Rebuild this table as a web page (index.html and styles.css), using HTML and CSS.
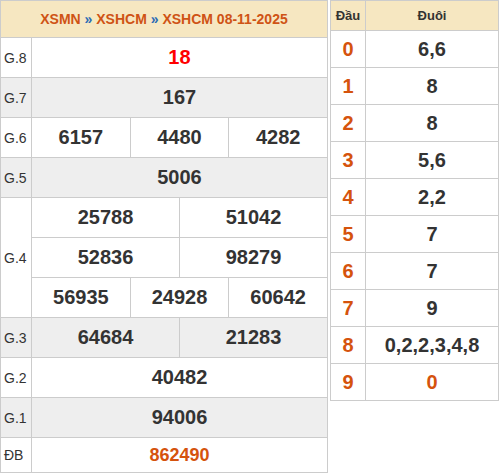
FILE: index.html
```html
<!DOCTYPE html>
<html lang="vi">
<head>
<meta charset="utf-8">
<title>XSHCM 08-11-2025</title>
<link rel="stylesheet" href="styles.css">
</head>
<body>
<div class="wrap">
  <div class="kq">
    <div class="head"><span>XSMN <span class="sep">»</span> XSHCM <span class="sep">»</span> XSHCM 08-11-2025</span></div>

    <div class="lbl">G.8</div>
    <div class="num c6 red">18</div>

    <div class="lbl gray">G.7</div>
    <div class="num c6 gray">167</div>

    <div class="lbl">G.6</div>
    <div class="num c2">6157</div>
    <div class="num c2">4480</div>
    <div class="num c2">4282</div>

    <div class="lbl gray">G.5</div>
    <div class="num c6 gray">5006</div>

    <div class="lbl r3">G.4</div>
    <div class="num c3">25788</div>
    <div class="num c3">51042</div>
    <div class="num c3">52836</div>
    <div class="num c3">98279</div>
    <div class="num c2">56935</div>
    <div class="num c2">24928</div>
    <div class="num c2">60642</div>

    <div class="lbl gray">G.3</div>
    <div class="num c3 gray">64684</div>
    <div class="num c3 gray">21283</div>

    <div class="lbl">G.2</div>
    <div class="num c6">40482</div>

    <div class="lbl gray">G.1</div>
    <div class="num c6 gray">94006</div>

    <div class="lbl">ĐB</div>
    <div class="num c6 db">862490</div>
  </div>

  <div class="lt">
    <div class="th">Đầu</div>
    <div class="th">Đuôi</div>

    <div class="dau">0</div><div class="duoi">6,6</div>
    <div class="dau">1</div><div class="duoi">8</div>
    <div class="dau">2</div><div class="duoi">8</div>
    <div class="dau">3</div><div class="duoi">5,6</div>
    <div class="dau">4</div><div class="duoi">2,2</div>
    <div class="dau">5</div><div class="duoi">7</div>
    <div class="dau">6</div><div class="duoi">7</div>
    <div class="dau">7</div><div class="duoi">9</div>
    <div class="dau">8</div><div class="duoi">0,2,2,3,4,8</div>
    <div class="dau">9</div><div class="duoi orange">0</div>
  </div>
</div>
</body>
</html>
```

FILE: styles.css
```css
* { box-sizing: border-box; }

html, body {
  margin: 0;
  padding: 0;
  background: #fff;
  font-family: "Liberation Sans", Arial, sans-serif;
  color: #333;
}

.wrap {
  display: flex;
  align-items: flex-start;
  gap: 2px;
}

.kq {
  width: 328px;
  display: grid;
  grid-template-columns: 31px repeat(6, 1fr);
  grid-template-rows: 37px repeat(10, 40px) 35px;
  border-left: 1px solid #ccc;
  border-top: 1px solid #ccc;
}

.kq > div {
  border-right: 1px solid #ccc;
  border-bottom: 1px solid #ccc;
  display: flex;
  align-items: center;
}

.kq .head {
  grid-column: 1 / -1;
  background: #f6e7c1;
  color: #cf5315;
  font-weight: bold;
  font-size: 14px;
  justify-content: center;
}

.sep { color: #2a6bb5; }

.lbl {
  font-size: 14px;
  padding-left: 3px;
  color: #333;
}

.r3 { grid-row: span 3; }

.num {
  justify-content: center;
  font-weight: bold;
  font-size: 20px;
  color: #333;
}

.c6 { grid-column: span 6; }
.c3 { grid-column: span 3; }
.c2 { grid-column: span 2; }

.gray { background: #eeeeee; }

.red { color: #f00; }
.kq .db { color: #d5530d; font-size: 18px; }
.lt .orange { color: #d5530d; }

.lt {
  width: 169px;
  display: grid;
  grid-template-columns: 35px 1fr;
  grid-template-rows: 30px;
  grid-auto-rows: 37px;
  border-left: 1px solid #ccc;
  border-top: 1px solid #ccc;
}

.lt > div {
  border-right: 1px solid #ccc;
  border-bottom: 1px solid #ccc;
  display: flex;
  align-items: center;
  justify-content: center;
}

.th {
  background: #f6e7c1;
  font-weight: bold;
  font-size: 13px;
  color: #333;
}

.dau {
  font-weight: bold;
  font-size: 20px;
  color: #d5530d;
}

.duoi {
  font-weight: bold;
  font-size: 20px;
  color: #333;
}
```
